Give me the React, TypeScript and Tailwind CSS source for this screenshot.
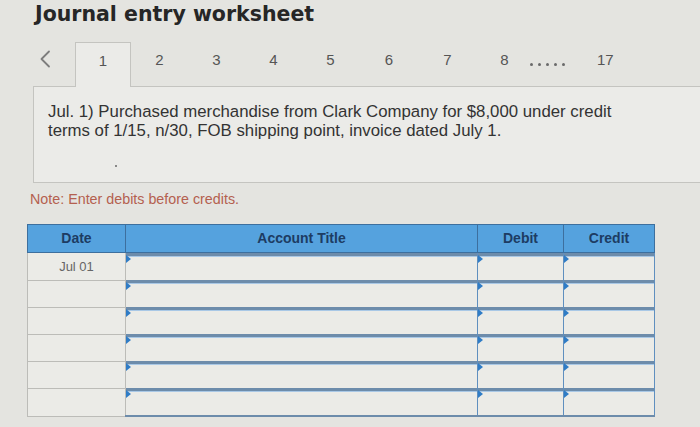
const tabs = [
  { n: "1", w: "w-[56px]" },
  { n: "2", w: "w-[57px]" },
  { n: "3", w: "w-[57px]" },
  { n: "4", w: "w-[57px]" },
  { n: "5", w: "w-[57px]" },
  { n: "6", w: "w-[60px]" },
  { n: "7", w: "w-[57px]" },
  { n: "8", w: "w-[57px]" },
];
const rows = ["Jul 01", "", "", "", "", ""];

function InputCell({ w }: { w: string }) {
  return (
    <td className={`${w} p-0 h-[27px] border-x border-[#5f8fbf] align-top`}>
      <div className="relative h-[27px] border-t-[3px] border-[#6d8cab] bg-[#ebebe7] shadow-[inset_0_1px_0_#a9c8e6]">
        <span className="absolute left-0 top-[-1px] w-0 h-0 border-y-[4px] border-y-transparent border-l-[5px] border-l-[#2f7cc6]" />
      </div>
    </td>
  );
}

export default function App() {
  return (
    <div className="relative w-[700px] h-[427px] overflow-hidden bg-[#e4e4e0] font-['Liberation_Sans',Arial,sans-serif]">
      <div className="pl-[35px] pt-[1px] h-[42px] font-['DejaVu_Sans',sans-serif] font-bold text-[20.5px] leading-[26px] text-[#262626]">
        Journal entry worksheet
      </div>

      <div className="flex items-start pl-[35px] h-[44px] text-[15px] leading-[16px] text-[#555]">
        <div className="w-[40px] h-full pt-[8px] pl-[4px]">
          <svg width="12" height="18" viewBox="0 0 12 18" fill="none">
            <polyline points="10,1.5 2.5,9 10,16.5" stroke="#7d7d7d" strokeWidth="1.8" strokeLinejoin="round" strokeLinecap="round" />
          </svg>
        </div>
        {tabs.map((t, i) => (
          <div
            key={t.n}
            className={
              i === 0
                ? `relative z-10 ${t.w} h-[45px] mb-[-1px] pt-[10px] text-center bg-[#ebebe8] border-x border-t border-[#c4c4c0]`
                : `${t.w} h-full pt-[10px] text-center`
            }
          >
            {t.n}
          </div>
        ))}
        <div className="ml-[-3px] w-[40px] pt-[21px] flex gap-[5px]">
          {[0, 1, 2, 3, 4].map((d) => (
            <span key={d} className="w-[3px] h-[3px] rounded-full bg-[#6a6a6a]" />
          ))}
        </div>
        <div className="ml-[27px] pt-[10px]">17</div>
      </div>

      <div className="ml-[33px] h-[97px] border border-r-0 border-[#c4c4c0] bg-[#ebebe8] pl-[14px] pt-[15px] text-[16.8px] leading-[19px] text-[#333]">
        <p>Jul. 1) Purchased merchandise from Clark Company for $8,000 under credit</p>
        <p>terms of 1/15, n/30, FOB shipping point, invoice dated July 1.</p>
        <div className="ml-[67px] mt-[25px] w-[2px] h-[2px] bg-[#888]" />
      </div>

      <p className="pl-[30px] pt-[8px] text-[14.3px] leading-[16px] text-[#b4604f]">
        Note: Enter debits before credits.
      </p>

      <table className="ml-[27px] mt-[17px] border-collapse text-[14px]">
        <thead>
          <tr className="h-[28px] bg-[#55a2de] text-[#1d3c63]">
            <th className="w-[98px] border border-[#3d6f9e] font-bold">Date</th>
            <th className="w-[352px] border border-[#3d6f9e] font-bold">Account Title</th>
            <th className="w-[86px] border border-[#3d6f9e] font-bold">Debit</th>
            <th className="w-[91px] border border-[#3d6f9e] font-bold">Credit</th>
          </tr>
        </thead>
        <tbody>
          {rows.map((d, i) => (
            <tr key={i} className="h-[27px]">
              <td className="w-[98px] border border-[#bcbcb8] bg-[#ebebe7] text-center text-[13px] text-[#666] align-middle">
                {d}
              </td>
              <InputCell w="w-[352px]" />
              <InputCell w="w-[86px]" />
              <InputCell w="w-[91px]" />
            </tr>
          ))}
          <tr className="h-[2px]">
            <td className="border-t border-[#bcbcb8]" />
            <td colSpan={3} className="border-t-2 border-[#6d8cab]" />
          </tr>
        </tbody>
      </table>
    </div>
  );
}
